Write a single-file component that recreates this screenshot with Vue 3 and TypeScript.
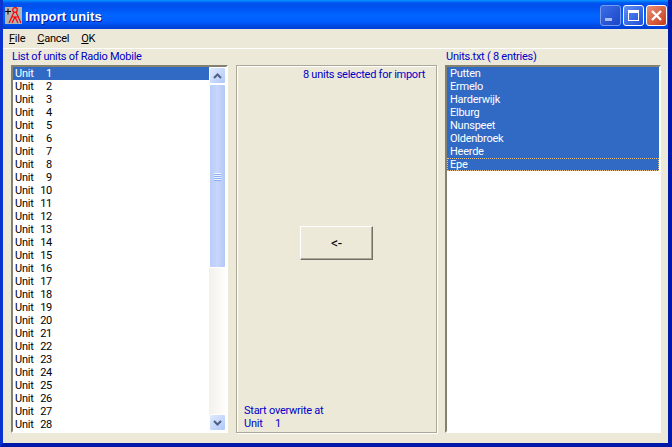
<script setup lang="ts">
const units: number[] = Array.from({ length: 28 }, (_, i) => i + 1)
const towns: string[] = ['Putten', 'Ermelo', 'Harderwijk', 'Elburg', 'Nunspeet', 'Oldenbroek', 'Heerde', 'Epe']
const grips: number[] = [0, 1, 2, 3]
</script>

<template>
  <div class="window">
    <header class="titlebar">
      <svg class="appicon" width="17" height="17" viewBox="0 0 17 17">
        <rect width="17" height="17" fill="#b4b4b4" />
        <path d="M0 4.500h6M3 1.500v6" stroke="#000" stroke-width="1" fill="none" />
        <circle cx="10" cy="3" r="2.300" fill="none" stroke="#f00" stroke-width="1.200" />
        <path d="M9 5 4 16M11 5l5 11M6 10h8M7 16l3-6 3 6" stroke="#f00" stroke-width="1.200" fill="none" />
      </svg>
      <span class="title">Import units</span>
      <div class="winbtns">
        <div class="wbtn min"><i class="minbar"></i></div>
        <div class="wbtn max"><i class="maxbox"></i></div>
        <div class="wbtn close">
          <svg width="13" height="13" viewBox="0 0 13 13">
            <path d="M2 2l9 9M11 2l-9 9" stroke="#fff" stroke-width="2.400" fill="none" />
          </svg>
        </div>
      </div>
    </header>

    <div class="client">
      <nav class="menu">
        <span><u>F</u>ile</span>
        <span><u>C</u>ancel</span>
        <span><u>O</u>K</span>
      </nav>

      <div class="labels">
        <span class="lab-left">List of units of Radio Mobile</span>
        <span class="lab-right">Units.txt ( 8 entries)</span>
      </div>

      <main class="panes">
        <section class="list left">
          <div class="rows">
            <div v-for="u in units" :key="u" class="row unit" :class="{ sel: u === 1 }">
              <span class="uname">Unit</span><span class="unum">{{ u }}</span>
            </div>
          </div>
          <div class="scrollbar">
            <div class="sbtn">
              <svg width="9" height="6" viewBox="0 0 9 6"><path d="M1 5l3.500-3.500L8 5" stroke="#4d6185" stroke-width="2" fill="none" /></svg>
            </div>
            <div class="thumb">
              <i v-for="g in grips" :key="g" class="grip"></i>
            </div>
            <div class="track"></div>
            <div class="sbtn">
              <svg width="9" height="6" viewBox="0 0 9 6"><path d="M1 1l3.500 3.500L8 1" stroke="#4d6185" stroke-width="2" fill="none" /></svg>
            </div>
          </div>
        </section>

        <section class="center">
          <div class="selected">8 units selected for import</div>
          <div class="mid">
            <button class="arrow">&lt;-</button>
          </div>
          <div class="overwrite">
            <div>Start overwrite at</div>
            <div class="ounit"><span class="uname">Unit</span><span class="unum">1</span></div>
          </div>
        </section>

        <section class="list right">
          <div class="rows full">
            <div v-for="(t, i) in towns" :key="t" class="row sel town" :class="{ focus: i === towns.length - 1 }">{{ t }}</div>
          </div>
        </section>
      </main>
    </div>
  </div>
</template>

<style scoped>
.window {
  width: 672px;
  height: 447px;
  box-sizing: border-box;
  display: flex;
  flex-direction: column;
  overflow: hidden;
  background: #0831d9;
  font-family: Roboto, "Liberation Sans", sans-serif;
  font-size: 11px;
  line-height: 13px;
  letter-spacing: -0.25px;
  border-left: 3px solid #0a33d0;
  border-right: 4px solid #0019a8;
  border-bottom: 4px solid #0019a8;
}
.titlebar {
  height: 29px;
  margin: 0 -4px 0 -3px;
  flex: none;
  display: flex;
  align-items: center;
  padding: 2px 5px 0 5px;
  box-sizing: border-box;
  background: linear-gradient(to bottom, #0997ff 0, #0053ee 3px, #0050ee 7px, #0066ff 15px, #005bff 22px, #0048dd 26px, #003dd7 29px);
}
.appicon {
  flex: none;
}
.title {
  margin-left: 3px;
  padding-top: 2px;
  color: #fff;
  font-family: "Liberation Sans", sans-serif;
  font-weight: 700;
  font-size: 13px;
  letter-spacing: 0.15px;
  text-shadow: 1px 1px #0f1089;
  flex: 1;
}
.winbtns {
  display: flex;
  gap: 2px;
  margin-top: -1px;
}
.wbtn {
  width: 21px;
  height: 21px;
  box-sizing: border-box;
  border: 1px solid #fff;
  border-radius: 3px;
  position: relative;
  display: flex;
  align-items: center;
  justify-content: center;
}
.min {
  background: linear-gradient(135deg, #3b6fe6, #1c44c8);
  border-color: #7a9bec;
}
.minbar {
  position: absolute;
  left: 4px;
  bottom: 4px;
  width: 7px;
  height: 3px;
  background: #a9bdf0;
}
.max {
  background: linear-gradient(135deg, #5f8ff0, #1f4fd8);
}
.maxbox {
  width: 11px;
  height: 11px;
  box-sizing: border-box;
  border: 1px solid #fff;
  border-top-width: 3px;
}
.close {
  background: linear-gradient(135deg, #e89078, #c63a18);
}
.client {
  flex: 1;
  min-height: 0;
  display: flex;
  flex-direction: column;
  background: #ece9d8;
}
.menu {
  height: 20px;
  flex: none;
  box-sizing: border-box;
  display: flex;
  gap: 12px;
  padding: 3px 0 0 6px;
  color: #000;
  border-bottom: 1px solid #fff;
}
.labels {
  height: 16px;
  flex: none;
  display: flex;
  color: #0000c8;
  padding-top: 1px;
  box-sizing: border-box;
}
.lab-left {
  margin-left: 9px;
  width: 434px;
}
.panes {
  display: flex;
  height: 368px;
  flex: none;
  padding-left: 8px;
}
.list {
  box-sizing: border-box;
  background: #fff;
  border: 2px solid #f1efe2;
  border-top-color: #848170;
  border-left-color: #848170;
  border-right-color: #fff;
  border-bottom-color: #fff;
  display: flex;
  height: 368px;
  overflow: hidden;
}
.left {
  width: 217px;
}
.right {
  width: 216px;
  margin-left: 8px;
}
.rows {
  flex: 1;
  min-width: 0;
  overflow: hidden;
}
.row {
  height: 13px;
  padding-left: 2px;
  color: #000;
  white-space: nowrap;
}
.unit {
  display: flex;
}
.uname {
  width: 23px;
  flex: none;
}
.unum {
  width: 14px;
  text-align: right;
  flex: none;
}
.sel {
  background: #316ac5;
  color: #fff;
}
.town {
  padding-left: 3px;
}
.focus {
  outline: 1px dotted #e6c080;
  outline-offset: -1px;
}
.scrollbar {
  width: 17px;
  flex: none;
  display: flex;
  flex-direction: column;
  background: linear-gradient(to right, #f3f1ec, #fefefb);
  height: 364px;
}
.sbtn {
  height: 17px;
  flex: none;
  box-sizing: border-box;
  border: 1px solid #fff;
  border-radius: 2px;
  background: linear-gradient(135deg, #e1eafe, #aec8f7);
  display: flex;
  align-items: center;
  justify-content: center;
}
.thumb {
  height: 184px;
  flex: none;
  box-sizing: border-box;
  border: 1px solid #fff;
  border-radius: 2px;
  background: linear-gradient(to right, #b8cdf8, #c7d6fb 50%, #b3c9f7);
  display: flex;
  flex-direction: column;
  align-items: center;
  justify-content: center;
  gap: 1px;
}
.grip {
  width: 7px;
  height: 1px;
  background: #eef4fe;
  box-shadow: 0 1px #8cb0f8;
}
.track {
  flex: 1;
}
.center {
  width: 201px;
  height: 368px;
  margin-left: 8px;
  box-sizing: border-box;
  border: 1px solid #aca899;
  box-shadow: inset 1px 1px #fff, 1px 1px #fff;
  display: flex;
  flex-direction: column;
  color: #0000c8;
}
.selected {
  text-align: right;
  padding: 2px 11px 0 0;
}
.mid {
  flex: 1;
  display: flex;
  justify-content: center;
  padding-top: 145px;
}
.arrow {
  width: 73px;
  height: 34px;
  box-sizing: border-box;
  border: 1px solid #fff;
  border-right-color: #716f64;
  border-bottom-color: #716f64;
  box-shadow: inset -1px -1px #aca899;
  background: #ece9d8;
  color: #000;
  font: inherit;
  font-size: 14px;
  letter-spacing: 0;
  padding: 0;
}
.overwrite {
  padding: 0 0 2px 7px;
}
.ounit {
  display: flex;
}
</style>
